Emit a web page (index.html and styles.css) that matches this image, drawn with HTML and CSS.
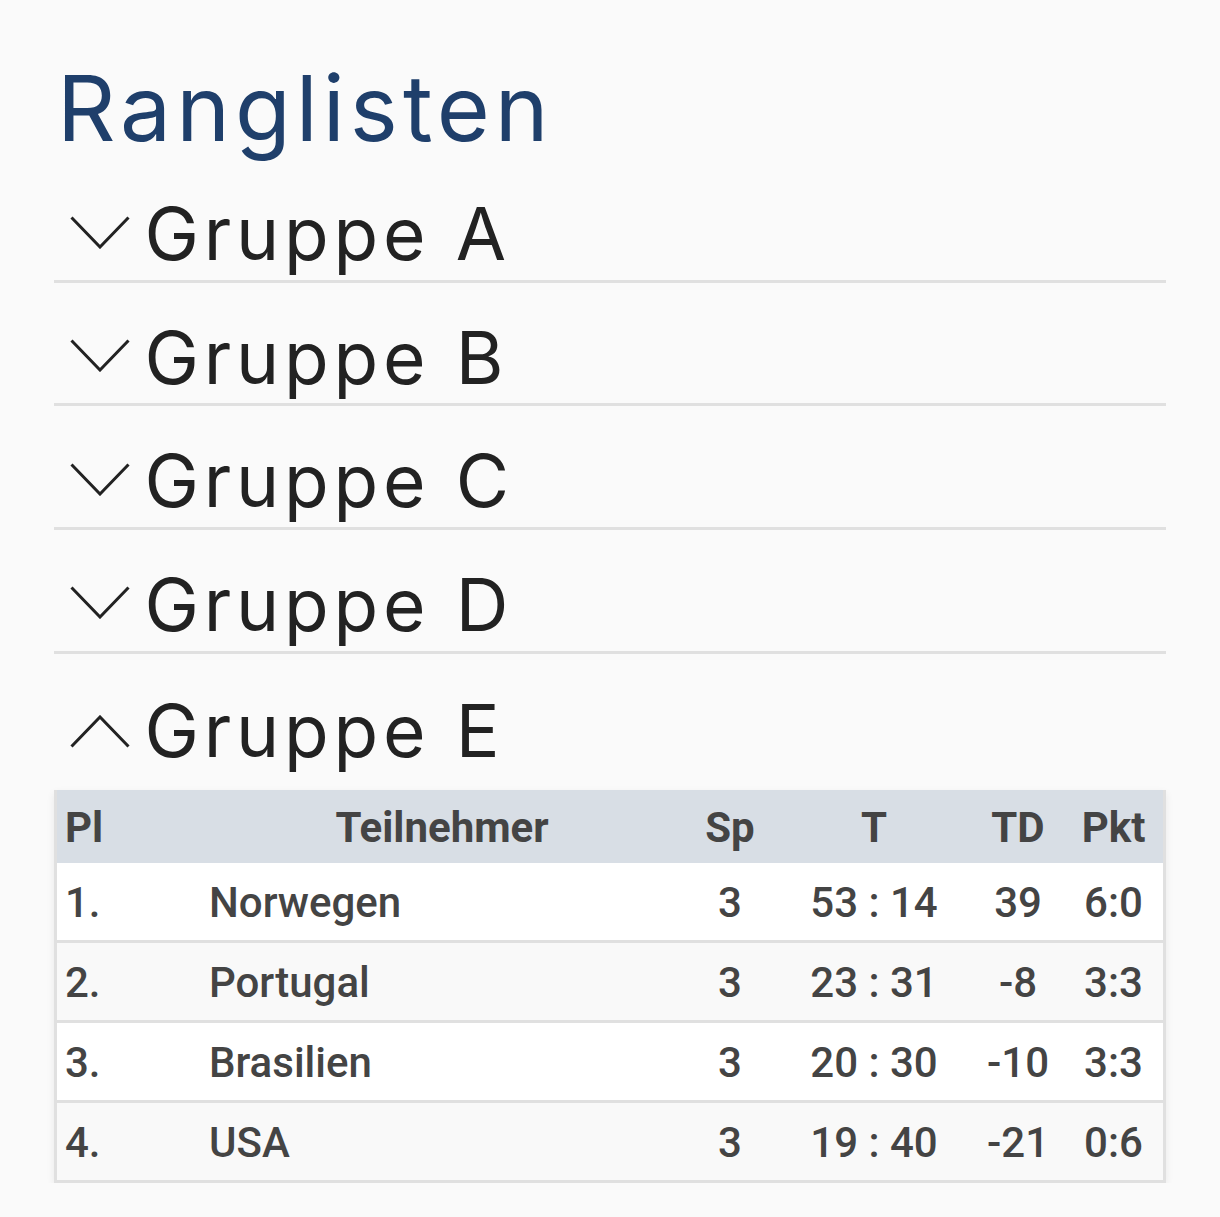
FILE: index.html
```html
<!DOCTYPE html>
<html lang="de">
<head>
<meta charset="utf-8">
<title>Ranglisten</title>
<link rel="stylesheet" href="styles.css">
</head>
<body>
<main class="page">
  <h1 class="title">Ranglisten</h1>
  <section class="groups">
    <h2 class="grp"><svg class="chev" width="60" height="33" viewBox="0 0 60 33"><path d="M1.5 1.5 L30 31 L58.5 1.5" /></svg>Gruppe A</h2>
    <h2 class="grp"><svg class="chev" width="60" height="33" viewBox="0 0 60 33"><path d="M1.5 1.5 L30 31 L58.5 1.5" /></svg>Gruppe B</h2>
    <h2 class="grp"><svg class="chev" width="60" height="33" viewBox="0 0 60 33"><path d="M1.5 1.5 L30 31 L58.5 1.5" /></svg>Gruppe C</h2>
    <h2 class="grp"><svg class="chev" width="60" height="33" viewBox="0 0 60 33"><path d="M1.5 1.5 L30 31 L58.5 1.5" /></svg>Gruppe D</h2>
    <h2 class="grp grp-open"><svg class="chev chev-up" width="60" height="33" viewBox="0 0 60 33"><path d="M1.5 31.5 L30 2 L58.5 31.5" /></svg>Gruppe E</h2>
  </section>
  <div class="tbl-wrap">
    <table class="tbl">
      <colgroup>
        <col class="c-pl"><col class="c-name"><col class="c-sp"><col class="c-t"><col class="c-td"><col class="c-pkt">
      </colgroup>
      <thead>
        <tr><th class="pl">Pl</th><th>Teilnehmer</th><th>Sp</th><th>T</th><th>TD</th><th>Pkt</th></tr>
      </thead>
      <tbody>
        <tr><td class="pl">1.</td><td class="name">Norwegen</td><td>3</td><td>53 : 14</td><td>39</td><td>6:0</td></tr>
        <tr><td class="pl">2.</td><td class="name">Portugal</td><td>3</td><td>23 : 31</td><td>-8</td><td>3:3</td></tr>
        <tr><td class="pl">3.</td><td class="name">Brasilien</td><td>3</td><td>20 : 30</td><td>-10</td><td>3:3</td></tr>
        <tr><td class="pl">4.</td><td class="name">USA</td><td>3</td><td>19 : 40</td><td>-21</td><td>0:6</td></tr>
      </tbody>
    </table>
  </div>
</main>
</body>
</html>
```
FILE: styles.css
```css
html, body {
  margin: 0;
  padding: 0;
  background: #fafafa;
}
body {
  font-family: "Inter", "Open Sans", sans-serif;
}
.page {
  padding: 63px 54px 0;
}
.title {
  margin: 0 0 5px;
  padding-left: 3px;
  font-family: "Inter", sans-serif;
  font-weight: 400;
  font-size: 91px;
  line-height: 91px;
  letter-spacing: 5px;
  color: #1f3f6b;
}
.groups {
  display: flex;
  flex-direction: column;
}
.grp {
  display: block;
  margin: 0;
  box-sizing: border-box;
  height: 123.67px;
  padding: 38px 0 9px 16px;
  border-bottom: 3px solid #e0e0e0;
  font-family: "Inter", sans-serif;
  font-weight: 400;
  font-size: 73px;
  line-height: 73px;
  letter-spacing: 4.8px;
  color: #222;
  white-space: nowrap;
}
.grp-open {
  border-bottom: none;
  height: 122.67px;
  padding-top: 40px;
  padding-bottom: 9.67px;
}
.chev {
  display: inline-block;
  vertical-align: 11.5px;
  margin-right: 14.5px;
  fill: none;
  stroke: #222;
  stroke-width: 3;
}
.grp-open .chev {
  vertical-align: 8.5px;
}
.tbl-wrap {
  margin-top: 14px;
  border-left: 3px solid #e0e0e0;
  border-right: 3px solid #e0e0e0;
  box-shadow: 0 3px 8px rgba(0, 0, 0, 0.07);
}
.tbl {
  width: 100%;
  border-collapse: collapse;
  table-layout: fixed;
  font-family: "Roboto", sans-serif;
  font-size: 42px;
  line-height: 49px;
  color: #444;
}
.c-pl { width: 143px; }
.c-name { width: 484px; }
.c-sp { width: 92px; }
.c-t { width: 196px; }
.c-td { width: 92px; }
.c-pkt { width: 99px; }
.tbl th {
  background: #d8dee5;
  font-weight: 700;
  text-align: center;
  padding: 13px 0 11px;
}
.tbl td {
  font-weight: 500;
  text-align: center;
  padding: 15px 0 13px;
  white-space: nowrap;
}
.tbl tbody tr {
  background: #fff;
  border-bottom: 3px solid #e0e0e0;
}
.tbl tbody tr:nth-child(even) {
  background: #f9f9f9;
}
.tbl .pl {
  text-align: left;
  padding-left: 8px;
}
.tbl td.name {
  text-align: left;
  padding-left: 9px;
}
```
